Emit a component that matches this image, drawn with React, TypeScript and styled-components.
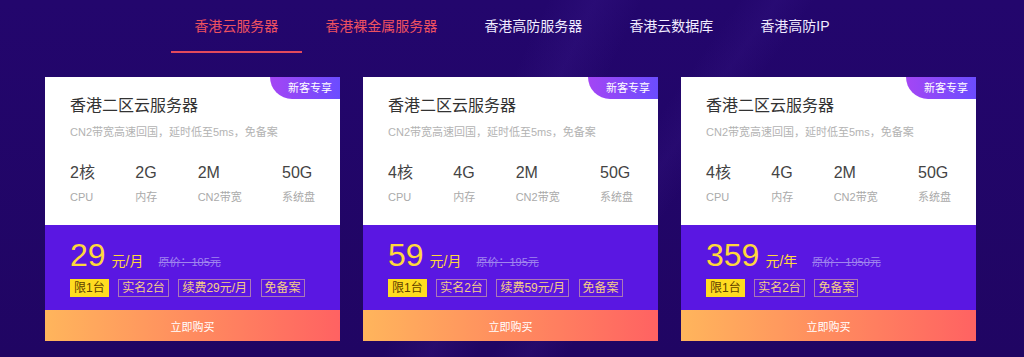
import React from 'react';
import styled, { createGlobalStyle } from 'styled-components';

const GlobalStyle = createGlobalStyle`
  html, body {
    margin: 0;
    padding: 0;
    background: #200565;
  }
  body {
    font-family: 'Liberation Sans', 'Noto Sans CJK SC', sans-serif;
  }
  * {
    box-sizing: border-box;
  }
`;

const Page = styled.div`
  min-height: 357px;
  background:
    linear-gradient(115deg, transparent 46%, rgba(120, 80, 220, 0.08) 50%, transparent 54%),
    linear-gradient(125deg, transparent 58%, rgba(120, 80, 220, 0.06) 61%, transparent 64%),
    linear-gradient(180deg, #23066d 0%, #200563 100%);
  overflow: hidden;
`;

const Nav = styled.nav`
  display: flex;
  justify-content: center;
`;

const Tab = styled.div<{ $active?: boolean; $highlight?: boolean }>`
  padding: 16px 23.5px 15px;
  font-size: 14px;
  line-height: 20px;
  color: ${(p) => (p.$highlight ? '#ee5260' : '#f1ecff')};
  border-bottom: 2px solid ${(p) => (p.$active ? '#e44a5c' : 'transparent')};
  cursor: pointer;
  white-space: nowrap;
`;

const CardRow = styled.div`
  display: flex;
  gap: 23px;
  width: 934px;
  margin: 24px auto 0;
`;

const Card = styled.div`
  width: 295px;
  flex: none;
  position: relative;
  background: #fff;
  display: flex;
  flex-direction: column;
`;

const Badge = styled.div`
  position: absolute;
  top: 0;
  right: 0;
  width: 70px;
  height: 22px;
  padding-left: 18px;
  font-size: 11px;
  line-height: 22px;
  color: #fff;
  background: linear-gradient(to right, #a446f4, #6b4cff);
  border-bottom-left-radius: 22px;
`;

const Info = styled.div`
  padding: 18px 25px 20px;
`;

const Title = styled.div`
  font-size: 16px;
  line-height: 22px;
  color: #333;
`;

const Desc = styled.div`
  margin-top: 7px;
  font-size: 11px;
  line-height: 16px;
  color: #b3b3b3;
`;

const Specs = styled.div`
  display: flex;
  justify-content: space-between;
  margin-top: 22px;
`;

const Spec = styled.div`
  display: flex;
  flex-direction: column;
  gap: 5px;
`;

const SpecValue = styled.span`
  font-size: 16px;
  line-height: 22px;
  color: #444;
`;

const SpecLabel = styled.span`
  font-size: 11px;
  line-height: 16px;
  color: #aaa;
`;

const PricePanel = styled.div`
  background: #5a17e2;
  padding: 14px 25px 13px;
`;

const PriceRow = styled.div`
  display: flex;
  align-items: baseline;
  color: #ffd83c;
`;

const Amount = styled.span`
  font-size: 32px;
  line-height: 32px;
`;

const Unit = styled.span`
  font-size: 14px;
  margin-left: 6px;
`;

const Original = styled.span`
  font-size: 11px;
  margin-left: 15px;
  color: #a085ee;
  text-decoration: line-through;
`;

const Tags = styled.div`
  display: flex;
  gap: 9.5px;
  margin-top: 8px;
`;

const Tag = styled.span<{ $solid?: boolean }>`
  padding: 0 3px;
  font-size: 12px;
  line-height: 16px;
  border: 1px solid ${(p) => (p.$solid ? '#ffdc20' : '#ab78b6')};
  background: ${(p) => (p.$solid ? '#ffdc20' : 'transparent')};
  color: ${(p) => (p.$solid ? '#5e4000' : '#f5cd86')};
`;

const BuyButton = styled.button`
  display: block;
  width: 100%;
  height: 31px;
  border: none;
  padding: 0;
  font-family: inherit;
  font-size: 11px;
  color: #fff;
  background: linear-gradient(to right, #ffb55c, #ff6262);
  cursor: pointer;
`;

type Plan = {
  cpu: string;
  ram: string;
  bw: string;
  disk: string;
  price: string;
  unit: string;
  original: string;
  tags: string[];
};

const tabs = ['香港云服务器', '香港裸金属服务器', '香港高防服务器', '香港云数据库', '香港高防IP'];

const plans: Plan[] = [
  { cpu: '2核', ram: '2G', bw: '2M', disk: '50G', price: '29', unit: '元/月', original: '原价：105元', tags: ['实名2台', '续费29元/月', '免备案'] },
  { cpu: '4核', ram: '4G', bw: '2M', disk: '50G', price: '59', unit: '元/月', original: '原价：195元', tags: ['实名2台', '续费59元/月', '免备案'] },
  { cpu: '4核', ram: '4G', bw: '2M', disk: '50G', price: '359', unit: '元/年', original: '原价：1950元', tags: ['实名2台', '免备案'] },
];

const App: React.FC = () => {
  return (
    <Page>
      <GlobalStyle />
      <Nav>
        {tabs.map((t, i) => (
          <Tab key={t} $active={i === 0} $highlight={i < 2}>
            {t}
          </Tab>
        ))}
      </Nav>
      <CardRow>
        {plans.map((p, i) => (
          <Card key={i}>
            <Badge>新客专享</Badge>
            <Info>
              <Title>香港二区云服务器</Title>
              <Desc>CN2带宽高速回国，延时低至5ms，免备案</Desc>
              <Specs>
                <Spec>
                  <SpecValue>{p.cpu}</SpecValue>
                  <SpecLabel>CPU</SpecLabel>
                </Spec>
                <Spec>
                  <SpecValue>{p.ram}</SpecValue>
                  <SpecLabel>内存</SpecLabel>
                </Spec>
                <Spec>
                  <SpecValue>{p.bw}</SpecValue>
                  <SpecLabel>CN2带宽</SpecLabel>
                </Spec>
                <Spec>
                  <SpecValue>{p.disk}</SpecValue>
                  <SpecLabel>系统盘</SpecLabel>
                </Spec>
              </Specs>
            </Info>
            <PricePanel>
              <PriceRow>
                <Amount>{p.price}</Amount>
                <Unit>{p.unit}</Unit>
                <Original>{p.original}</Original>
              </PriceRow>
              <Tags>
                <Tag $solid>限1台</Tag>
                {p.tags.map((t) => (
                  <Tag key={t}>{t}</Tag>
                ))}
              </Tags>
            </PricePanel>
            <BuyButton>立即购买</BuyButton>
          </Card>
        ))}
      </CardRow>
    </Page>
  );
};

export default App;
